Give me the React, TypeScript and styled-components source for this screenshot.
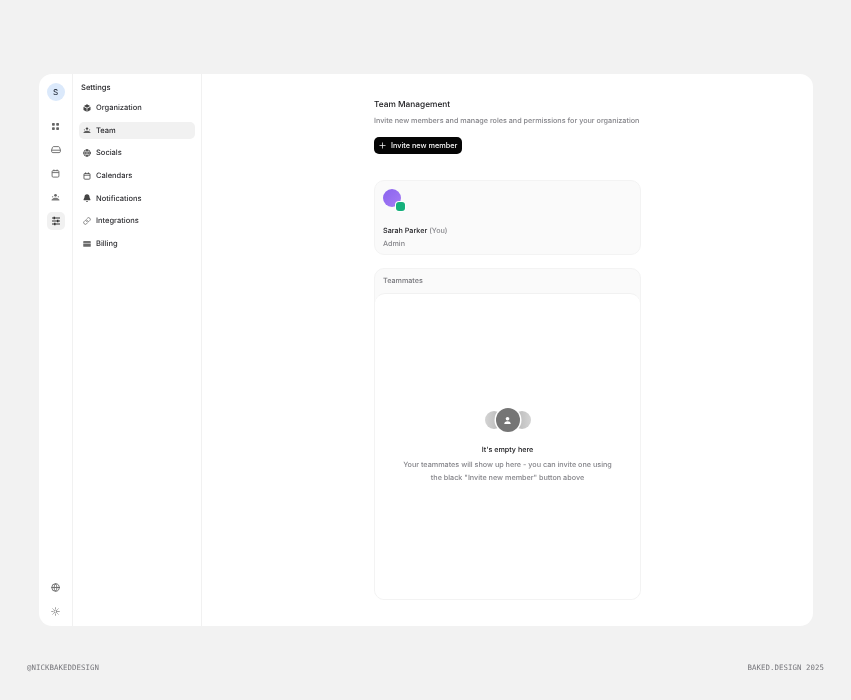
import { ReactNode } from 'react';
import styled, { createGlobalStyle } from 'styled-components';
import { Globe, Link, Plus, Sun } from 'lucide-react';

const GlobalStyle = createGlobalStyle`
  html, body {
    margin: 0;
    padding: 0;
    background: #f2f2f2;
  }
  body {
    font-family: Inter, "Liberation Sans", sans-serif;
    font-weight: 450;
    color: #17171a;
    text-rendering: geometricPrecision;
  }
`;

const Page = styled.div`
  width: 851px;
  height: 700px;
  box-sizing: border-box;
  padding: 74px 38px 0 39px;
  display: flex;
  flex-direction: column;
  will-change: transform;
`;

const Frame = styled.div`
  height: 552px;
  flex: none;
  display: flex;
  background: #fff;
  border-radius: 13px;
  overflow: hidden;
`;

const Rail = styled.nav`
  width: 34px;
  flex: none;
  box-sizing: border-box;
  border-right: 1px solid #f1f1f1;
  padding: 9px 0 0;
  display: flex;
  flex-direction: column;
  align-items: center;
`;

const Avatar = styled.div`
  width: 18px;
  height: 18px;
  border-radius: 50%;
  background: #dbe9fb;
  color: #2b3442;
  font-size: 8px;
  font-weight: 500;
  display: flex;
  align-items: center;
  justify-content: center;
  margin-bottom: 16px;
`;

const RailButton = styled.div<{ $active?: boolean }>`
  width: 18px;
  height: 18px;
  margin-bottom: 5.7px;
  border-radius: 5px;
  background: ${(p) => (p.$active ? '#f1f1f1' : 'transparent')};
  color: ${(p) => (p.$active ? '#333' : '#666')};
  display: flex;
  align-items: center;
  justify-content: center;
`;

const RailSpacer = styled.div`
  flex: 1;
`;

const SettingsPanel = styled.aside`
  width: 129px;
  flex: none;
  box-sizing: border-box;
  border-right: 1px solid #f1f1f1;
  padding: 7px 6px 0;
`;

const PanelTitle = styled.div`
  font-size: 7.6px;
  line-height: 13px;
  margin: 0 0 5px 2px;
  color: #26262a;
`;

const MenuItem = styled.div<{ $active?: boolean }>`
  height: 17px;
  margin-bottom: 5.7px;
  padding-left: 4px;
  display: flex;
  align-items: center;
  gap: 5px;
  border-radius: 5px;
  font-size: 7.5px;
  color: #2c2c30;
  background: ${(p) => (p.$active ? '#f1f1f1' : 'transparent')};
`;

const MenuIcon = styled.span`
  width: 8px;
  height: 8px;
  display: flex;
  align-items: center;
  justify-content: center;
  color: #444;
`;

const Main = styled.main`
  flex: 1;
  display: flex;
  flex-direction: column;
  align-items: center;
  padding-top: 25px;
`;

const Column = styled.div`
  width: 267px;
  display: flex;
  flex-direction: column;
`;

const Title = styled.h1`
  margin: 0;
  font-size: 8.3px;
  line-height: 13px;
  font-weight: 500;
  color: #17171a;
`;

const Subtitle = styled.p`
  margin: 3px 0 0;
  font-size: 7.22px;
  line-height: 12px;
  white-space: nowrap;
  color: #85858a;
`;

const InviteButton = styled.button`
  margin-top: 10px;
  align-self: flex-start;
  width: 88px;
  height: 17px;
  padding: 0 0 0 4px;
  border: none;
  border-radius: 5px;
  background: #050505;
  color: #f4f4f4;
  font-family: inherit;
  font-size: 7.3px;
  font-weight: inherit;
  white-space: nowrap;
  display: flex;
  align-items: center;
  gap: 4px;
`;

const ProfileCard = styled.section`
  margin-top: 26px;
  height: 75px;
  box-sizing: border-box;
  padding: 8px 8px;
  border: 1px solid #f3f3f3;
  border-radius: 10px;
  background: #fafafa;
`;

const AvatarStack = styled.div`
  position: relative;
  width: 18px;
  height: 18px;
  border-radius: 50%;
  background: linear-gradient(135deg, #8a63ee, #a67cf5);
`;

const StatusBadge = styled.span`
  position: absolute;
  right: -4px;
  bottom: -4px;
  width: 9px;
  height: 9px;
  border-radius: 3px;
  background: #16b07c;
  box-shadow: 0 0 0 1px #fff;
`;

const ProfileName = styled.div`
  margin-top: 18px;
  font-size: 7.2px;
  line-height: 12px;
  color: #1c1c20;
`;

const Muted = styled.span`
  color: #85858a;
`;

const ProfileRole = styled.div`
  margin-top: 1px;
  font-size: 7.2px;
  line-height: 12px;
  color: #85858a;
`;

const TeamCard = styled.section`
  margin-top: 13px;
  height: 332px;
  display: flex;
  flex-direction: column;
  box-sizing: border-box;
  border: 1px solid #f3f3f3;
  border-radius: 10px;
  background: #fafafa;
  overflow: hidden;
`;

const TeamHeader = styled.div`
  height: 24px;
  flex: none;
  box-sizing: border-box;
  padding: 0 8px 1px;
  display: flex;
  align-items: center;
  font-size: 7.2px;
  color: #77777c;
`;

const EmptyPanel = styled.div`
  flex: 1;
  background: #fff;
  border-top: 1px solid #f1f1f1;
  border-radius: 10px 10px 0 0;
  display: flex;
  flex-direction: column;
  align-items: center;
  padding-top: 113px;
`;

const Faces = styled.div`
  display: flex;
  align-items: center;
  height: 26px;
`;

const SideFace = styled.span<{ $side: 'left' | 'right' }>`
  width: 18px;
  height: 18px;
  border-radius: 50%;
  background: ${(p) =>
    p.$side === 'left'
      ? 'linear-gradient(90deg, #d4d4d4, #b4b4b4)'
      : 'linear-gradient(90deg, #b4b4b4, #d4d4d4)'};
  margin: ${(p) => (p.$side === 'left' ? '0 -7px 0 0' : '0 0 0 -7px')};
`;

const MainFace = styled.span`
  position: relative;
  z-index: 1;
  width: 24px;
  height: 24px;
  border-radius: 50%;
  background: #757575;
  box-shadow: 0 0 0 1.5px #fff;
  display: flex;
  align-items: center;
  justify-content: center;
`;

const EmptyTitle = styled.div`
  margin-top: 11px;
  font-size: 7.2px;
  line-height: 12px;
  font-weight: 500;
  color: #17171a;
`;

const EmptyText = styled.p`
  margin: 2px 0 0;
  font-size: 7.22px;
  line-height: 13px;
  color: #85858a;
  text-align: center;
`;

const Footer = styled.footer`
  margin: 37px -11px 0 -12px;
  display: flex;
  justify-content: space-between;
  font-family: "DejaVu Sans Mono", "Liberation Mono", monospace;
  font-size: 7.4px;
  font-weight: 400;
  line-height: 10px;
  letter-spacing: 0.05px;
  color: #77777c;
`;

const GridIcon = () => (
  <svg width="9" height="9" viewBox="0 0 9 9" fill="currentColor">
    <rect x="1" y="1" width="2.8" height="2.8" rx="0.7" />
    <rect x="5.2" y="1" width="2.8" height="2.8" rx="0.7" />
    <rect x="1" y="5.2" width="2.8" height="2.8" rx="0.7" />
    <rect x="5.2" y="5.2" width="2.8" height="2.8" rx="0.7" />
  </svg>
);

const InboxIcon = () => (
  <svg width="10" height="9" viewBox="0 0 10 9" fill="none" stroke="currentColor" strokeWidth="0.9">
    <path d="M2.6 1.6h4.8c.5 0 .9.3 1.1.8l.9 2.6v1.4c0 .7-.5 1.2-1.200 1.200H1.800C1.100 7.600.6 7.100.6 6.400V5l.9-2.600c.2-.5.6-.8 1.100-.8z" />
    <path d="M.7 5.200h8.600" />
  </svg>
);

const CalendarIcon = ({ size = 9 }: { size?: number }) => (
  <svg width={size} height={size} viewBox="0 0 10 10" fill="none" stroke="currentColor" strokeWidth="1">
    <rect x="1.200" y="1.800" width="7.600" height="7.200" rx="1.200" />
    <path d="M1.200 4h7.600M3.200.6v1.800M6.800.6v1.800" />
  </svg>
);

const SlidersIcon = () => (
  <svg width="10" height="10" viewBox="0 0 10 10" fill="none" stroke="currentColor" strokeWidth="1.100">
    <path d="M1 2h8M1 5h8M1 8h8" />
    <path d="M3.300 .8v2.400M6.700 3.800v2.400M3.800 6.800v2.400" strokeWidth="1.500" />
  </svg>
);

const TeamIcon = () => (
  <svg width="9" height="9" viewBox="0 0 10 10" fill="currentColor">
    <circle cx="5" cy="2.600" r="1.500" />
    <circle cx="1.800" cy="4.200" r="0.800" opacity="0.7" />
    <circle cx="8.200" cy="4.200" r="0.800" opacity="0.7" />
    <path d="M.6 8.200c0-1 .6-1.700 1.300-1.800.5-.6 1.700-1 3.100-1s2.600.4 3.100 1c.7.100 1.300.8 1.300 1.800z" opacity="0.85" />
  </svg>
);

const CubeIcon = () => (
  <svg width="8" height="8" viewBox="0 0 10 10" fill="currentColor">
    <path d="M5 .4l3.900 2.100L5 4.600 1.100 2.500z" />
    <path d="M.6 3.300l4 2.200v4.100l-4-2.200z" />
    <path d="M9.400 3.300l-4 2.200v4.100l4-2.200z" />
  </svg>
);

const BellIcon = () => (
  <svg width="8" height="8" viewBox="0 0 10 10" fill="currentColor">
    <path d="M5 .3c1.900 0 3.100 1.400 3.100 3.200 0 2 1.300 2.800 1.300 3.700 0 .3-.2.500-.5.500H1.100c-.3 0-.5-.2-.5-.5 0-.9 1.300-1.700 1.300-3.700C1.900 1.700 3.100.3 5 .3z" />
    <path d="M3.600 8.600h2.800C6.200 9.400 5.700 9.800 5 9.800s-1.200-.4-1.400-1.200z" />
  </svg>
);

const CardIcon = () => (
  <svg width="9" height="8" viewBox="0 0 10 8" fill="currentColor">
    <path d="M1 .6h8c.4 0 .7.3.7.7v1H.3v-1C.3.9.6.6 1 .6z" />
    <path d="M.3 3.400h9.400v3.300c0 .4-.3.700-.7.700H1c-.4 0-.7-.3-.7-.7z" opacity="0.8" />
  </svg>
);

const PersonIcon = () => (
  <svg width="9" height="9" viewBox="0 0 10 10" fill="#fff">
    <circle cx="5" cy="3" r="2" />
    <path d="M1.400 9c0-2 1.600-3.100 3.600-3.100S8.600 7 8.600 9z" />
  </svg>
);

interface MenuEntry {
  label: string;
  icon: ReactNode;
  active?: boolean;
}

const menu: MenuEntry[] = [
  { label: 'Organization', icon: <CubeIcon /> },
  { label: 'Team', icon: <TeamIcon />, active: true },
  { label: 'Socials', icon: <Globe size={8} strokeWidth={2.6} /> },
  { label: 'Calendars', icon: <CalendarIcon size={8} /> },
  { label: 'Notifications', icon: <BellIcon /> },
  { label: 'Integrations', icon: <Link size={8} strokeWidth={1.8} /> },
  { label: 'Billing', icon: <CardIcon /> },
];

export default function App() {
  return (
    <Page>
      <GlobalStyle />
      <Frame>
        <Rail>
          <Avatar>S</Avatar>
          <RailButton><GridIcon /></RailButton>
          <RailButton><InboxIcon /></RailButton>
          <RailButton><CalendarIcon /></RailButton>
          <RailButton><TeamIcon /></RailButton>
          <RailButton $active><SlidersIcon /></RailButton>
          <RailSpacer />
          <RailButton><Globe size={9} strokeWidth={2.4} /></RailButton>
          <RailButton><Sun size={9} strokeWidth={1.8} /></RailButton>
        </Rail>
        <SettingsPanel>
          <PanelTitle>Settings</PanelTitle>
          {menu.map((item) => (
            <MenuItem key={item.label} $active={item.active}>
              <MenuIcon>{item.icon}</MenuIcon>
              {item.label}
            </MenuItem>
          ))}
        </SettingsPanel>
        <Main>
          <Column>
            <Title>Team Management</Title>
            <Subtitle>Invite new members and manage roles and permissions for your organization</Subtitle>
            <InviteButton>
              <Plus size={9} strokeWidth={2} />
              Invite new member
            </InviteButton>
            <ProfileCard>
              <AvatarStack>
                <StatusBadge />
              </AvatarStack>
              <ProfileName>
                Sarah Parker <Muted>(You)</Muted>
              </ProfileName>
              <ProfileRole>Admin</ProfileRole>
            </ProfileCard>
            <TeamCard>
              <TeamHeader>Teammates</TeamHeader>
              <EmptyPanel>
                <Faces>
                  <SideFace $side="left" />
                  <MainFace><PersonIcon /></MainFace>
                  <SideFace $side="right" />
                </Faces>
                <EmptyTitle>It's empty here</EmptyTitle>
                <EmptyText>
                  Your teammates will show up here - you can invite one using
                  <br />
                  the black "Invite new member" button above
                </EmptyText>
              </EmptyPanel>
            </TeamCard>
          </Column>
        </Main>
      </Frame>
      <Footer>
        <span>@NICKBAKEDDESIGN</span>
        <span>BAKED.DESIGN 2025</span>
      </Footer>
    </Page>
  );
}
